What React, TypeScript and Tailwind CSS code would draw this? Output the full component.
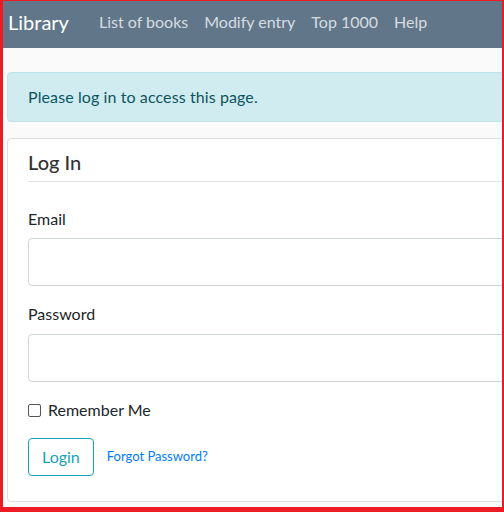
export default function App() {
  const links = ['List of books', 'Modify entry', 'Top 1000', 'Help']

  return (
    <div
      className="h-[512px] w-[504px] overflow-hidden border-[#ed1c24] border-l-[3px] border-t border-r-2 border-b-[5px] bg-[#fafafa] text-[#212529]"
      style={{ fontFamily: 'Lato, "Noto Sans", sans-serif' }}
    >
      <div className="w-[620px]">
        {/* Navbar */}
        <nav className="flex h-[47px] items-center bg-[#617789] pb-[6px] pl-[5px]">
          <span className="mr-[22px] text-[20px] leading-[30px] text-white">Library</span>
          <ul className="flex items-center">
            {links.map(l => (
              <li key={l} className="px-2 text-[16px] leading-6 text-[#d6dce1]">
                {l}
              </li>
            ))}
          </ul>
        </nav>

        {/* Alert */}
        <div className="ml-1 mt-6 rounded border border-[#bee5eb] bg-[#d1ecf1] px-5 py-3 text-[16px] leading-6 tracking-[0.1px] text-[#0c5460]">
          Please log in to access this page.
        </div>

        {/* Card */}
        <div className="ml-1 mt-4 rounded border border-[#dfdfdf] bg-white px-5 pb-[25px] pt-[9px]">
          <h2 className="text-[20px] leading-[28px] font-medium text-[#333]">Log In</h2>
          <hr className="mt-[5px] border-t border-[#e2e2e2]" />

          <label className="mt-[25px] block text-[16px] leading-6">Email</label>
          <div className="mt-[7px] h-[48px] rounded border border-[#ced4da] bg-white" />

          <label className="mt-4 block text-[16px] leading-6">Password</label>
          <div className="mt-2 h-[48px] rounded border border-[#ced4da] bg-white" />

          <div className="mt-4 flex h-6 items-center gap-[7px]">
            <span className="h-[13px] w-[13px] rounded-[2px] border border-[#555] bg-white" />
            <span className="text-[16px] leading-6">Remember Me</span>
          </div>

          <div className="mt-4 flex items-center gap-[13px]">
            <button className="h-[38px] rounded border border-[#17a2b8] px-[13px] text-[16px] text-[#17a2b8]">
              Login
            </button>
            <a className="text-[13px] text-[#007bff]">Forgot Password?</a>
          </div>
        </div>
      </div>
    </div>
  )
}
